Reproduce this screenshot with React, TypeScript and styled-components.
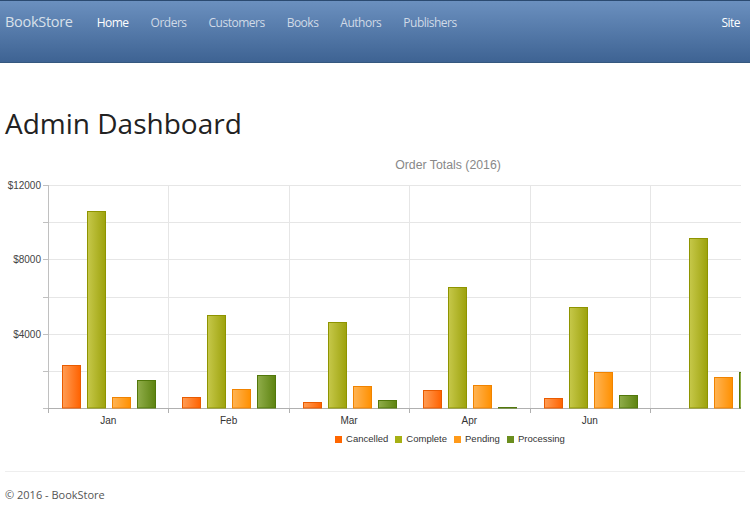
import React from "react";
import styled, { createGlobalStyle } from "styled-components";

const GlobalStyle = createGlobalStyle`
  html, body { margin: 0; padding: 0; background: #fff; }
  body { font-family: "Open Sans", "Noto Sans", Arial, sans-serif; color: #222; }
  * { box-sizing: border-box; }
`;

const Navbar = styled.header`
  display: flex;
  align-items: flex-start;
  height: 63px;
  border-top: 1px solid #2b4a70;
  border-bottom: 1px solid #35587f;
  background: linear-gradient(#6b90bf, #3e6393);
`;

const Brand = styled.a`
  padding: 11px 0 0 5px;
  margin-right: 13px;
  font-size: 14.5px;
  line-height: 20px;
  letter-spacing: -0.3px;
  color: #d8e0ea;
  text-decoration: none;
`;

const NavLink = styled.a<{ $active?: boolean }>`
  padding: 13px 11px 0;
  font-size: 12px;
  line-height: 18px;
  letter-spacing: -0.5px;
  color: ${(p) => (p.$active ? "#ffffff" : "#d0dae7")};
  text-decoration: none;
`;

const Spacer = styled.div`
  flex: 1;
`;

const SiteLink = styled(NavLink)`
  padding-right: 10px;
  color: #ffffff;
`;

const Main = styled.main`
  padding: 0 5px;
`;

const Heading = styled.h1`
  margin: 45px 0 0;
  font-size: 28px;
  line-height: 31px;
  font-weight: 400;
  color: #222;
`;

const ChartViewport = styled.section`
  margin-top: 13px;
  width: 736px;
  overflow: hidden;
`;

const ChartFrame = styled.div`
  width: 886px;
  font-family: "Liberation Sans", Arial, sans-serif;
`;

const ChartTitle = styled.div`
  padding-top: 2px;
  text-align: center;
  font-size: 12.3px;
  line-height: 22px;
  color: #888;
`;

const Plot = styled.svg`
  display: block;
`;

const Legend = styled.div`
  display: flex;
  justify-content: center;
  gap: 7px;
  height: 21px;
  padding: 1px 0 0 4px;
  line-height: 20px;
  font-size: 9.5px;
  color: #333;
`;

const LegendItem = styled.div`
  display: flex;
  align-items: center;
  gap: 4px;
`;

const Swatch = styled.span<{ $color: string }>`
  width: 7px;
  height: 7px;
  background: ${(p) => p.$color};
`;

const Footer = styled.footer`
  margin-top: 22px;
  border-top: 1px solid #eee;
  padding-top: 15px;
  font-size: 11px;
  line-height: 16px;
  color: #555;
`;

type Series = { name: string; swatch: string; light: string; dark: string; stroke: string };

const series: Series[] = [
  { name: "Cancelled", swatch: "#ff6600", light: "#ff9d55", dark: "#ff6200", stroke: "#e95b00" },
  { name: "Complete", swatch: "#a6b014", light: "#c6c84a", dark: "#9da20c", stroke: "#8e9400" },
  { name: "Pending", swatch: "#ff9a1a", light: "#ffb455", dark: "#ff9000", stroke: "#f08300" },
  { name: "Processing", swatch: "#6b8e1e", light: "#90ad4a", dark: "#5d8310", stroke: "#52780b" },
];

const categories = [
  { label: "Jan", values: [2320, 10610, 610, 1500] },
  { label: "Feb", values: [610, 5010, 1020, 1780] },
  { label: "Mar", values: [320, 4630, 1170, 410] },
  { label: "Apr", values: [950, 6510, 1240, 50] },
  { label: "Jun", values: [540, 5440, 1940, 720] },
  { label: "", values: [0, 9140, 1690, 1960] },
];

const PLOT_LEFT = 48;
const PLOT_TOP = 185;
const PLOT_BOTTOM = 408;
const PLOT_RIGHT = 891;
const CAT_W = 120.4;
const MAX = 12000;
const scale = (PLOT_BOTTOM - PLOT_TOP) / MAX;

const yGrid = [0, 2000, 4000, 6000, 8000, 10000, 12000];
const yLabels = [4000, 8000, 12000];

function OrderChart() {
  const boundaries = Array.from({ length: 8 }, (_, i) => Math.round(PLOT_LEFT + i * CAT_W) + 0.5);
  return (
    <Plot width={886} height={252} viewBox="5 176 886 252">
      <defs>
        {series.map((s, i) => (
          <linearGradient key={s.name} id={`g${i}`} x1="0" y1="0" x2="1" y2="0">
            <stop offset="0" stopColor={s.light} />
            <stop offset="1" stopColor={s.dark} />
          </linearGradient>
        ))}
      </defs>
      {yGrid.map((v) => {
        const y = Math.round(PLOT_BOTTOM - v * scale) + 0.5;
        return (
          <g key={v}>
            <line x1={PLOT_LEFT} x2={PLOT_RIGHT} y1={y} y2={y} stroke="#e6e6e6" />
            <line x1={43} x2={PLOT_LEFT} y1={y} y2={y} stroke="#c0c0c0" />
          </g>
        );
      })}
      {boundaries.slice(1).map((x) => (
        <line key={x} x1={x} x2={x} y1={PLOT_TOP} y2={PLOT_BOTTOM} stroke="#e6e6e6" />
      ))}
      <line x1={48.5} x2={48.5} y1={PLOT_TOP} y2={PLOT_BOTTOM} stroke="#c0c0c0" />
      <line x1={PLOT_LEFT} x2={PLOT_RIGHT} y1={408.5} y2={408.5} stroke="#b0b0b0" />
      {boundaries.map((x) => (
        <line key={`t${x}`} x1={x} x2={x} y1={408} y2={413} stroke="#b0b0b0" />
      ))}
      {yLabels.map((v) => (
        <text
          key={v}
          x={41}
          y={Math.round(PLOT_BOTTOM - v * scale)}
          dy="0.35em"
          textAnchor="end"
          fontSize="10"
          fill="#444"
          fontFamily="Liberation Sans, Arial, sans-serif"
        >
          ${v}
        </text>
      ))}
      {categories.map((c, ci) => {
        const x0 = PLOT_LEFT + ci * CAT_W;
        return (
          <g key={ci}>
            {c.values.map((v, si) => {
              if (v <= 0) return null;
              const h = Math.max(1, v * scale);
              const x = Math.round(x0 + 14 + si * 25) + 0.5;
              const y = Math.round(PLOT_BOTTOM - h) + 0.5;
              return (
                <rect
                  key={si}
                  x={x}
                  y={y}
                  width={18}
                  height={PLOT_BOTTOM - y}
                  fill={`url(#g${si})`}
                  stroke={series[si].stroke}
                />
              );
            })}
            {c.label && (
              <text
                x={x0 + CAT_W / 2}
                y={424}
                textAnchor="middle"
                fontSize="10"
                fill="#333"
                fontFamily="Liberation Sans, Arial, sans-serif"
              >
                {c.label}
              </text>
            )}
          </g>
        );
      })}
    </Plot>
  );
}

export default function App() {
  return (
    <>
      <GlobalStyle />
      <Navbar>
        <Brand href="#">BookStore</Brand>
        <NavLink $active href="#">Home</NavLink>
        <NavLink href="#">Orders</NavLink>
        <NavLink href="#">Customers</NavLink>
        <NavLink href="#">Books</NavLink>
        <NavLink href="#">Authors</NavLink>
        <NavLink href="#">Publishers</NavLink>
        <Spacer />
        <SiteLink href="#">Site</SiteLink>
      </Navbar>
      <Main>
        <Heading>Admin Dashboard</Heading>
        <ChartViewport>
          <ChartFrame>
            <ChartTitle>Order Totals (2016)</ChartTitle>
            <OrderChart />
            <Legend>
              {series.map((s) => (
                <LegendItem key={s.name}>
                  <Swatch $color={s.swatch} />
                  {s.name}
                </LegendItem>
              ))}
            </Legend>
          </ChartFrame>
        </ChartViewport>
        <Footer>© 2016 - BookStore</Footer>
      </Main>
    </>
  );
}
